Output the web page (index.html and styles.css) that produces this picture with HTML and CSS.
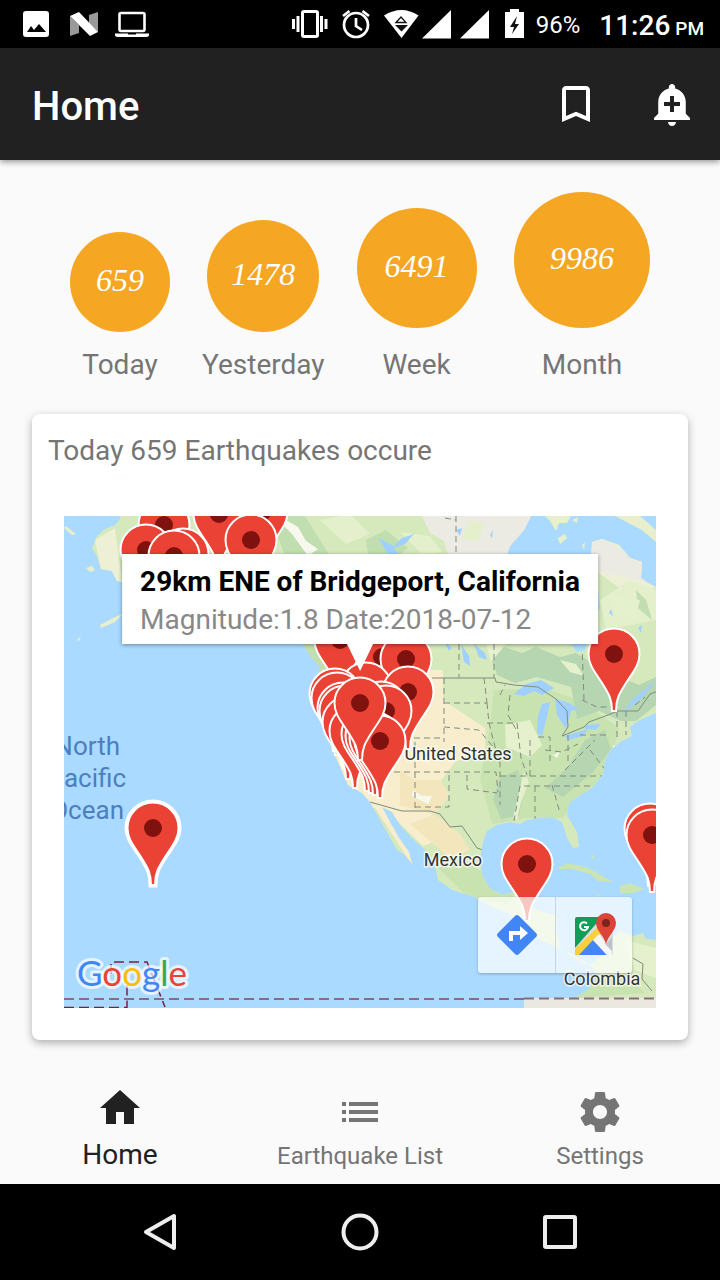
FILE: index.html
```html
<!DOCTYPE html>
<html lang="en">
<head>
<meta charset="utf-8">
<meta name="viewport" content="width=device-width, initial-scale=1">
<title>Home</title>
<link rel="stylesheet" href="styles.css">
</head>
<body>
<div class="status">
  <div class="status-left">
    <svg width="48" height="48" viewBox="12 0 48 48"><path fill="#fff" fill-rule="evenodd" d="M26 11h20a3 3 0 0 1 3 3v20a3 3 0 0 1-3 3H26a3 3 0 0 1-3-3V14a3 3 0 0 1 3-3zM27 32h19l-7-8-5 6-3-4z"/></svg>
    <svg width="48" height="48" viewBox="60 0 48 48"><path fill="#999" d="M70 16l9 9v8l-9 3zM98 12v20l-9-8v-9z"/><path fill="#fff" d="M70 16l9-4 19 20-8 4z"/></svg>
    <svg width="48" height="48" viewBox="108 0 48 48"><rect x="119.500" y="13" width="25" height="18" rx="1.500" fill="none" stroke="#fff" stroke-width="2.600"/><path fill="#fff" fill-rule="evenodd" d="M115 33.500h34v2q-1 1.500-3 1.500h-28q-2 0-3-1.500zM128 33.500h8v1h-8z"/></svg>
  </div>
  <div class="status-right">
    <svg width="48" height="48" viewBox="288 0 48 48"><rect x="303.500" y="11.500" width="15" height="25" rx="1.500" fill="none" stroke="#fff" stroke-width="3"/><path fill="#fff" d="M293 19h3v10h-3zM297.500 16h3v16h-3zM321 16h3v16h-3zM325.500 19h3v10h-3z"/></svg>
    <svg width="44" height="48" viewBox="336 0 44 48"><g fill="none" stroke="#fff" stroke-width="2.700"><circle cx="357" cy="25" r="12"/><path d="M357 18v8l6 4M344 16l6.500-5M370 16l-6.500-5"/></g></svg>
    <svg width="42" height="48" viewBox="380 0 42 48"><path fill="#fff" d="M385 15.500q17.500-11 34.500 0L402.500 38z"/><path fill="none" stroke="#111" stroke-width="1.300" d="M397 22.500l5-5.500 5 5.500z"/><path fill="#111" d="M396 25h13l-6.500 6.500z"/></svg>
    <svg width="36" height="48" viewBox="422 0 36 48"><path fill="#fff" d="M423 38.500L452 10v28.500z"/></svg>
    <svg width="38" height="48" viewBox="458 0 38 48"><path fill="#fff" d="M461 38.500L490 10v28.500z"/></svg>
    <svg width="38" height="48" viewBox="496 0 38 48"><path fill="#fff" d="M506 12h5V9h9v3h5v26h-19z"/><path fill="#111" d="M518 16l-7 11h4l-2 7 7-10h-4z"/></svg>
    <span class="battery">96%</span>
    <span class="clock">11:26 <small>PM</small></span>
  </div>
</div>

<header class="appbar">
  <h1>Home</h1>
  <button class="icon-btn" aria-label="Bookmarks"><svg width="48" height="48" viewBox="0 0 24 24" fill="#fff"><path d="M17 3H7c-1.100 0-2 .9-2 2v16l7-3 7 3V5c0-1.100-.9-2-2-2zm0 15l-5-2.180L7 18V5h10v13z"/></svg></button>
  <button class="icon-btn" aria-label="Add alert"><svg width="48" height="48" viewBox="0 0 24 24" fill="#fff"><path d="M10.010 21.010c0 1.100.89 1.990 1.990 1.990s1.990-.89 1.990-1.990h-3.980zm8.870-4.190V11c0-3.250-2.250-5.970-5.290-6.690v-.72C13.590 2.710 12.880 2 12 2s-1.590.71-1.590 1.590v.72C7.370 5.030 5.120 7.750 5.120 11v5.820L3 18.940V20h18v-1.060l-2.120-2.120zM16 13.010h-3v3h-2v-3H8V11h3V8h2v3h3v2.010z"/></svg></button>
</header>

<main>
  <section class="stats">
    <div class="stat near"><div class="disc disc-a">659</div><span>Today</span></div>
    <div class="stat near"><div class="disc disc-b">1478</div><span>Yesterday</span></div>
    <div class="stat"><div class="disc disc-c">6491</div><span>Week</span></div>
    <div class="stat"><div class="disc disc-d">9986</div><span>Month</span></div>
  </section>

  <section class="card">
    <h2>Today 659 Earthquakes occure</h2>
    <div class="map">
      <svg class="map-art" viewBox="64 516 592 492" preserveAspectRatio="xMidYMid slice">
        <defs>
          <g id="pin"><path d="M-2 57C-2 45-5 40-12 29C-19 18-25.500 11-25.500 0A25.500 25.500 0 0 1 25.500 0C25.500 11 19 18 12 29C5 40 2 45 2 57Z" fill="#ea4335" stroke="#fff" stroke-width="2"/><circle r="9" fill="#7f120e"/></g>
          <clipPath id="land"><path d="M124 500L120 519L115 525L105 529L97 536L92 548L97 556L101 569L112 571L117 581L126 583L180 580L260 590L300 640L309 654L320 668L312 690L318 716L330 745L338 762L348 785L362 793L370 802L380 820L388 834L397 850L405 855L412 864L409 852L399 838L390 822L382 807L392 812L400 825L412 838L425 850L434 862L438 880L452 890L475 897L490 906L510 914L525 926L538 938L556 948L572 954L590 965L600 957L606 943L620 931L634 936L643 933L646 939L656 940V998H575L588 990L598 975L590 966L572 957L561 949L557 930L556 915L538 911L526 900L532 891L520 890L503 895L490 889L482 875L480 860L483 842L487 831L497 825L510 822L520 824L527 820L540 818L552 817L562 822L567 838L573 848L579 847L577 832L567 815L569 803L580 795L592 788L603 774L605 760L611 749L622 741L632 736L630 727L640 720L656 713V587L648 583L641 578L642 562L630 558L619 545L602 539L592 542L591 556L598 590L600 608L590 624L585 650L577 652L568 640L540 610L505 560L510 546L524 530L531 516V500Z"/></clipPath>
        </defs>
        <rect x="64" y="516" width="592" height="492" fill="#aadaff"/>
        <g clip-path="url(#land)">
          <rect x="64" y="500" width="592" height="510" fill="#d5e9bd"/>
          <path fill="#eef0d5" d="M95 540l20-12 8 60-20-8zM440 500h100l-20 90h-70l12-40zM590 535l60 12 6 40-25 10-40-30z"/>
          <path fill="#ebebe4" d="M400 500h140l-26 55h-66l-4-14-14-8-8-17-16-4zM592 535l52 25 1 22-20-5-33-6z"/>
          <path fill="#e4efcb" d="M320 520l30-6 20 20-24 10zM470 520l14 4-6 18-16-4zM600 600l30-20 26 10v30l-50 10zM400 532l30 4 12 16-20 2z"/>
          <path fill="#c0deb0" d="M270 516l35 0 25 40-45 0zM366 540l20-10 22 18-10 8h-30zM300 644l25 0 10 40-30 10zM636 590l10 10 6 20-14-12z"/>
          <path fill="#f8edcc" d="M395 690l30-20 18 0 0 30 42 28 0 24-30 10-15 20-10 30 18 24-25 10-36-35-40-10-20-40zM444 726l42 4-10 16-32 4zM370 800l14 4 20 30 10 34zM424 650l8 30-14 10z"/>
          <path fill="#f3e6bd" d="M400 770l15 10 25 0 10 15-15 20-35-10zM410 824l25-10 25 20 10 16-20 8z"/>
          <path fill="#c9e3b0" d="M494 690l50-2 35 12 40 28-12 50-45 40-35 0-35 6-12-45 8-40zM438 868l22-8 38 20 24 6-15 18-40-8zM575 998l22-20 28-5 20 20zM395 826l12 8 20 24 8 18-22-30z"/>
          <path fill="#b6d6b1" d="M490 655l14-8 18 6 14-6 24 10 16-4 29 18 34 14 17-8 0 28-20 16-15 0-22-10-22 8-6-32-34-10-22 6-18-8zM500 778l18-8 6 20-5 26-18 3-8-20zM545 788l22-20 18-28 20-10 6 20-18 22-30 25z"/>
          <path fill="#e5f1cd" d="M505 725l25-5 12 25-12 12-24-10zM524 772l5 10-8 20-4 18-4-2 6-26zM486 644l20 0-15 18zM610 595l30 5-5 18-20-3zM560 660l16 4 8 12-14-4zM625 940l31 8v30l-22-8z"/>
          <g fill="#9fd0ff"><path d="M378 538l16 8 8-8 12-4-9 10-11 4 4 6-10 0zM456 530l6-2-2 8zM490 535l3-5-1 8zM461 644l8 12 1 10-6-4zM474 644l11 9 2 7-8-3zM443 640l9 8-3 3z"/><path d="M514 694l12-10 15-4 13 8-12 7-8-4-10 5zM542 704l8-2-3 15-5 19-5-3 1-17zM555 699l12 3 12 7-8 2-5 18-9-14zM564 736l24-7-5 7-14 4zM585 725l16-1-5 6-11-1zM638 628l4-3-1 8zM611 609l2 7-4-3zM632 700l24-20-14 18-20 16z"/></g>
          <g fill="#f7f9ef"><path d="M286 520l12 7 8 14 12 8-10 7-16-22-14-14zM413 790l9 6 10 0-4 8-16-8zM420 676l5 7-7 6zM505 560l6 2 3-4zM549 752l5 3 6-4-3 7zM613 745l4 2-4 3z"/></g>
          <g fill="none" stroke="#808a80" stroke-width="1"><path d="M432 678h63l1 4 18 3 24 2 18 12 11 12 1 16-6 9 22-9 5-5 19-7 10-4h20l12-17 16-6M370 802l32 9h28l10 3 10 13 12-1 15 22 15 5M633 958l10 6-1 15 10 12"/><path stroke-dasharray="6 4" d="M456 516v40M445 518l11 2M494 644v34M459 644v34M444 678v64M484 678l3 25M444 703h43M444 727l35 3 15 18M384 738h60M384 772h112l2 20M415 742v68M449 775v32h-34M467 775v14l30 4M487 703l2 20 5 20 6 20v42M487 723h30l4 35 6 17M500 776h104M524 786h70M530 740v40M520 786l-6 35M535 786v34M552 785l8 28M545 750l17 2 16-8M538 737h12v25M568 735v30M580 735h30M584 700l-2-56M582 700l15 7h15M617 711v30M626 711v24M500 695l5-10M565 770l30-30M590 750l17 22M510 695l-2 20 10 18M635 705l10-8"/></g>
        </g>
        <g fill="#e9efcb"><path d="M66 526l10 8-4 1-8-7zM86 568l6-2 3 4-5 2zM100 625l15-8 8-3-8 8-14 6zM77 640l4-4-2 5zM545 516h26l-4 7-8 0-3 8-6-10zM572 520l6-3-1 6zM558 538l7-4 2 4-7 6zM615 516h25l16 14v12l-14-12zM582 545l3-3-1 8z"/><path fill="#cbe4b3" d="M557 869l10-6 20 4 12 7 14 8-15-1-8-7-18-5zM620 886l10-3 14 6-10 4-14 0zM595 894l6 1-3 2zM590 854l5 3-2 2z"/></g>
        <path d="M524 998h132v10H524z" fill="#ebe8df"/>
        <g fill="none" stroke="#8b6b80" stroke-width="2"><path stroke-dasharray="10 5" d="M64 999h460M524 998.500h132"/><path stroke="#7c2040" stroke-width="1.500" stroke-dasharray="10 5" d="M111 974v-12h36l18 45M64 1007.500h63v-24"/></g>

        <g class="ocean" text-anchor="end"><text x="120" y="755">North</text><text x="126" y="787">Pacific</text><text x="124" y="819">Ocean</text></g>
        <g class="place" text-anchor="middle"><text x="458" y="760">United States</text><text x="453" y="866">Mexico</text><text x="602" y="985">Colombia</text></g>

        <use href="#pin" x="164" y="525"/><use href="#pin" x="262" y="512"/><use href="#pin" x="219" y="514"/><use href="#pin" x="146" y="550"/><use href="#pin" x="183" y="554"/><use href="#pin" x="174" y="556"/><use href="#pin" x="251" y="540"/>
        <use href="#pin" x="340" y="640"/><use href="#pin" x="382" y="657"/><use href="#pin" x="406" y="659"/><use href="#pin" x="366" y="688"/><use href="#pin" x="335" y="694"/><use href="#pin" x="337" y="698"/><use href="#pin" x="408" y="692"/><use href="#pin" x="343" y="708"/><use href="#pin" x="345" y="711"/><use href="#pin" x="381" y="707"/><use href="#pin" x="386" y="711"/><use href="#pin" x="348" y="722"/><use href="#pin" x="355" y="731"/><use href="#pin" x="367" y="734"/><use href="#pin" x="371" y="736"/><use href="#pin" x="375" y="738"/><use href="#pin" x="380" y="741"/><use href="#pin" x="360" y="703"/>
        <use href="#pin" x="614" y="654"/><use href="#pin" x="527" y="864"/><use href="#pin" x="650" y="829"/><use href="#pin" x="652" y="835"/>
        <path d="M151 885C151 873 148 868 141 857C134 846 127 839 127 828A26 26 0 0 1 179 828C179 839 172 846 165 857C158 868 155 873 155 885Z" fill="#fff" stroke="#fff" stroke-width="5"/><use href="#pin" x="153" y="828"/>

        <text class="brand" x="77" y="986"><tspan fill="#4285f4">G</tspan><tspan fill="#ea4335">o</tspan><tspan fill="#fbbc05">o</tspan><tspan fill="#4285f4">g</tspan><tspan fill="#34a853">l</tspan><tspan fill="#ea4335">e</tspan></text>
      </svg>
      <div class="info"><strong>29km ENE of Bridgeport, California</strong><span>Magnitude:1.8 Date:2018-07-12</span></div>
      <div class="map-tools">
        <button aria-label="Directions"><svg width="44" height="44" viewBox="-22 -22 44 44"><path fill="#4285f4" d="M-2-19Q0-21 2-19L19-2Q21 0 19 2L2 19Q0 21-2 19L-19 2Q-21 0-19-2Z"/><path fill="#fff" d="M-8 6v-10h11v-5l8 7-8 7v-5h-7v6z"/></svg></button>
        <button aria-label="Open in maps"><svg width="44" height="44" viewBox="0 0 44 44"><rect x="4" y="4" width="37" height="38" rx="2" fill="#dadce0"/><path fill="#0f9d58" d="M5 4h25L3 35V6q0-2 2-2z"/><path fill="#fbcf3b" d="M3 36L27 13l5 5L8 42H3z"/><path fill="#4285f4" d="M21 27l14 15H7z"/><path fill="#f5f5f5" d="M21 27l6-6 13 17v4h-5z"/><path fill="#bdc1c6" d="M34 32l6-8v14z"/><path fill="#db4437" d="M34 32C33 23 24 18 24 10A10 10 0 0 1 44 10C44 18 35 23 34 32Z"/><circle cx="34" cy="10" r="4" fill="#7b231c"/><path fill="none" stroke="#fff" stroke-width="2" d="M15 10.500A4 4 0 1 0 16 14h-4"/></svg></button>
      </div>
    </div>
  </section>
</main>

<nav class="tabs">
  <a class="tab active" href="#home"><svg width="48" height="48" viewBox="0 0 24 24" fill="currentColor"><path d="M10 20v-6h4v6h5v-8h3L12 3 2 12h3v8z"/></svg><span>Home</span></a>
  <a class="tab" href="#list"><svg width="44" height="48" viewBox="0 0 44 48" fill="currentColor"><path d="M4 14h4v4H4zM11 14h29v4H11zM4 22h4v4H4zM11 22h29v4H11zM4 30h4v4H4zM11 30h29v4H11z"/></svg><span>Earthquake List</span></a>
  <a class="tab" href="#settings"><svg width="48" height="48" viewBox="0 0 24 24" fill="currentColor"><path d="M19.430 12.980c.04-.32.07-.64.07-.98s-.03-.66-.07-.98l2.110-1.650c.19-.15.24-.42.12-.64l-2-3.460c-.12-.22-.39-.3-.61-.22l-2.490 1c-.52-.4-1.080-.73-1.690-.98l-.38-2.650C14.460 2.180 14.250 2 14 2h-4c-.25 0-.46.18-.49.42l-.38 2.650c-.61.25-1.170.59-1.690.98l-2.490-1c-.23-.09-.49 0-.61.22l-2 3.460c-.13.22-.07.49.12.64l2.110 1.650c-.04.32-.07.65-.07.98s.03.66.07.98l-2.110 1.650c-.19.15-.24.42-.12.64l2 3.460c.12.22.39.3.61.22l2.490-1c.52.4 1.080.73 1.690.98l.38 2.650c.03.24.24.42.49.42h4c.25 0 .46-.18.49-.42l.38-2.650c.61-.25 1.170-.59 1.690-.98l2.490 1c.23.09.49 0 .61-.22l2-3.460c.12-.22.07-.49-.12-.64l-2.110-1.650zM12 15.500c-1.930 0-3.500-1.570-3.500-3.500s1.570-3.500 3.500-3.500 3.500 1.570 3.500 3.500-1.570 3.500-3.500 3.500z"/></svg><span>Settings</span></a>
</nav>

<footer class="sysnav">
  <button aria-label="Back"><svg width="48" height="48" viewBox="0 0 48 48"><path d="M10 24L38 8v32z"/></svg></button>
  <button aria-label="Home screen"><svg width="48" height="48" viewBox="0 0 48 48"><circle cx="24" cy="24" r="16.500"/></svg></button>
  <button aria-label="Recent apps"><svg width="48" height="48" viewBox="0 0 48 48"><rect x="9" y="9" width="30" height="30" rx="1"/></svg></button>
</footer>
</body>
</html>
```
FILE: styles.css
```css
* { box-sizing: border-box; }
body {
  margin: 0;
  min-height: 100vh;
  display: flex;
  flex-direction: column;
  background: #fafafa;
  color: #757575;
  font-family: Roboto, "Noto Sans", sans-serif;
}
svg { display: block; flex: none; }
button { border: 0; padding: 0; background: none; }

.status {
  display: flex;
  justify-content: space-between;
  height: 48px;
  padding: 0 16px 0 12px;
  background: #000;
  color: #fff;
}
.status-left, .status-right { display: flex; align-items: center; }
.battery { padding: 2px 0 0 3px; font-size: 24px; }
.clock { padding: 2px 0 0 19px; font-size: 28px; font-weight: 500; }
.clock small { margin-left: -2px; font-size: 19px; }

.appbar {
  display: flex;
  align-items: center;
  height: 112px;
  padding: 0 24px 0 32px;
  background: #212121;
  color: #fff;
  box-shadow: 0 2px 6px rgba(0, 0, 0, .4);
}
.appbar h1 {
  flex: 1;
  margin: 0;
  padding-top: 6px;
  font-size: 40px;
  font-weight: 500;
  line-height: 48px;
}
.icon-btn + .icon-btn { margin-left: 48px; }

main { flex: 1; padding: 32px 32px 24px; }

.stats {
  display: flex;
  align-items: flex-end;
  gap: 32px;
  padding: 0 38px;
}
.stat { display: flex; flex-direction: column; align-items: center; }
.stat:last-child { margin-left: auto; }
.stat span { margin-top: 20px; font-size: 28px; line-height: 34px; }
.stat.near span { margin-top: 16px; }
.disc {
  display: flex;
  align-items: center;
  justify-content: center;
  padding-bottom: 4px;
  border-radius: 50%;
  background: #f5a623;
  color: #fff;
  font-family: "Liberation Serif", serif;
  font-size: 32px;
  font-style: italic;
}
.disc-a { width: 100px; height: 100px; }
.disc-b { width: 112px; height: 112px; }
.disc-c { width: 120px; height: 120px; }
.disc-d { width: 136px; height: 136px; }

.card {
  margin-top: 32px;
  padding: 20px 32px 32px;
  border-radius: 8px;
  background: #fff;
  box-shadow: 0 3px 8px rgba(0, 0, 0, .3);
}
.card h2 {
  margin: 0 -16px 48px;
  font-size: 28px;
  font-weight: 400;
  line-height: 34px;
}

.map { position: relative; }
.map-art { width: 100%; height: auto; }
.ocean { font-size: 26px; fill: #4c7fc0; }
.place {
  font-size: 18px;
  fill: #333;
  stroke: rgba(255, 255, 255, .7);
  stroke-width: 3px;
  paint-order: stroke;
}
.brand {
  font-family: Lato, sans-serif;
  font-size: 35px;
  stroke: rgba(255, 255, 255, .7);
  stroke-width: 6px;
  stroke-linejoin: round;
  paint-order: stroke;
}

.info {
  position: absolute;
  top: 38px;
  left: 50%;
  transform: translateX(-50%);
  display: flex;
  flex-direction: column;
  padding: 9px 18px 5px;
  background: #fff;
  color: #888;
  font-size: 28px;
  line-height: 38px;
  white-space: nowrap;
  box-shadow: 0 1px 4px rgba(0, 0, 0, .4);
}
.info strong { color: #000; font-weight: 700; }
.info::after {
  content: "";
  position: absolute;
  top: 100%;
  left: 50%;
  margin-left: -13px;
  border: solid transparent;
  border-width: 27px 13px 0;
  border-top-color: #fff;
}

.map-tools {
  position: absolute;
  right: 24px;
  bottom: 35px;
  display: flex;
  border-radius: 3px;
  background: rgba(255, 255, 255, .7);
  box-shadow: 0 1px 3px rgba(0, 0, 0, .25);
}
.map-tools button {
  display: flex;
  align-items: center;
  justify-content: center;
  width: 77px;
  height: 76px;
}
.map-tools button + button { border-left: 1px solid #ccd5de; }

.tabs { display: flex; height: 120px; }
.tab {
  flex: 1;
  display: flex;
  flex-direction: column;
  align-items: center;
  padding-top: 24px;
  color: #757575;
  font-size: 24px;
  line-height: 34px;
  text-decoration: none;
}
.tab span { padding-top: 3px; }
.tab.active { padding-top: 20px; color: #212121; font-size: 28px; }
.tab.active span { padding-top: 6px; }

.sysnav {
  display: flex;
  justify-content: center;
  gap: 152px;
  height: 96px;
  background: #000;
}
.sysnav svg { fill: none; stroke: #eee; stroke-width: 4; stroke-linejoin: round; }
```
